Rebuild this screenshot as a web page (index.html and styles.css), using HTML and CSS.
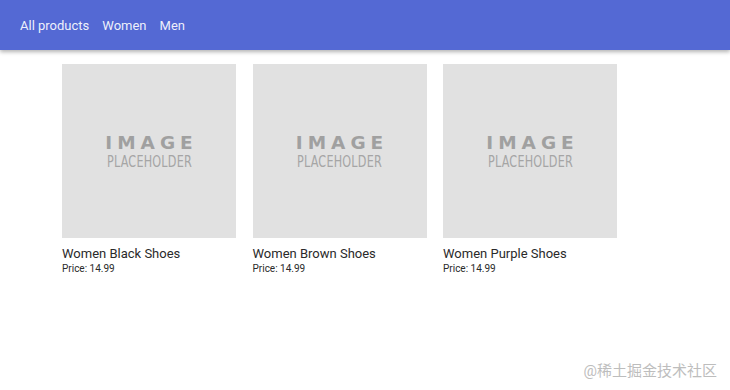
FILE: index.html
```html
<!DOCTYPE html>
<html>
<head>
<meta charset="utf-8">
<link rel="stylesheet" href="styles.css">
</head>
<body>
<header class="topbar">
  <nav class="nav">
    <a class="nav-link">All products</a>
    <a class="nav-link">Women</a>
    <a class="nav-link">Men</a>
  </nav>
</header>
<main class="products">
  <div class="card">
    <div class="thumb"><span class="ph-big">IMAGE</span><span class="ph-small">PLACEHOLDER</span></div>
    <div class="title">Women Black Shoes</div>
    <div class="price">Price: 14.99</div>
  </div>
  <div class="card">
    <div class="thumb"><span class="ph-big">IMAGE</span><span class="ph-small">PLACEHOLDER</span></div>
    <div class="title">Women Brown Shoes</div>
    <div class="price">Price: 14.99</div>
  </div>
  <div class="card">
    <div class="thumb"><span class="ph-big">IMAGE</span><span class="ph-small">PLACEHOLDER</span></div>
    <div class="title">Women Purple Shoes</div>
    <div class="price">Price: 14.99</div>
  </div>
</main>
<div class="watermark">@稀土掘金技术社区</div>
</body>
</html>
```
FILE: styles.css
```css
html, body {
  margin: 0;
  padding: 0;
  background: #fff;
  font-family: Roboto, "Noto Sans CJK SC", sans-serif;
}
.topbar {
  height: 50px;
  background: #5469d4;
  box-shadow: 0 2px 4px rgba(0,0,0,0.3);
  display: flex;
  align-items: center;
  padding-left: 20px;
}
.nav {
  display: flex;
  gap: 13px;
}
.nav-link {
  color: rgba(255,255,255,0.92);
  font-size: 13px;
}
.products {
  display: flex;
  gap: 16.5px;
  padding: 14px 0 0 62px;
}
.card {
  width: 174px;
}
.thumb {
  width: 174px;
  height: 174px;
  background: #e1e1e1;
  display: flex;
  flex-direction: column;
  align-items: center;
  justify-content: center;
}
.ph-big {
  font-family: "DejaVu Sans", sans-serif;
  font-weight: bold;
  font-size: 18.5px;
  letter-spacing: 5px;
  margin-left: 5px;
  color: #a0a0a0;
  line-height: 20px;
  margin-top: 2px;
}
.ph-small {
  font-family: "DejaVu Sans", sans-serif;
  font-size: 16.5px;
  color: #a5a5a5;
  transform: scaleX(0.68);
  line-height: 18px;
  letter-spacing: 0.3px;
}
.title {
  margin-top: 8px;
  font-size: 13px;
  color: #2a2a2a;
  line-height: 15px;
}
.price {
  font-size: 10px;
  color: #2a2a2a;
  line-height: 13px;
  margin-top: 1px;
}
.watermark {
  position: absolute;
  right: 13px;
  top: 359px;
  font-size: 15px;
  color: #bdbdbd;
}
```
